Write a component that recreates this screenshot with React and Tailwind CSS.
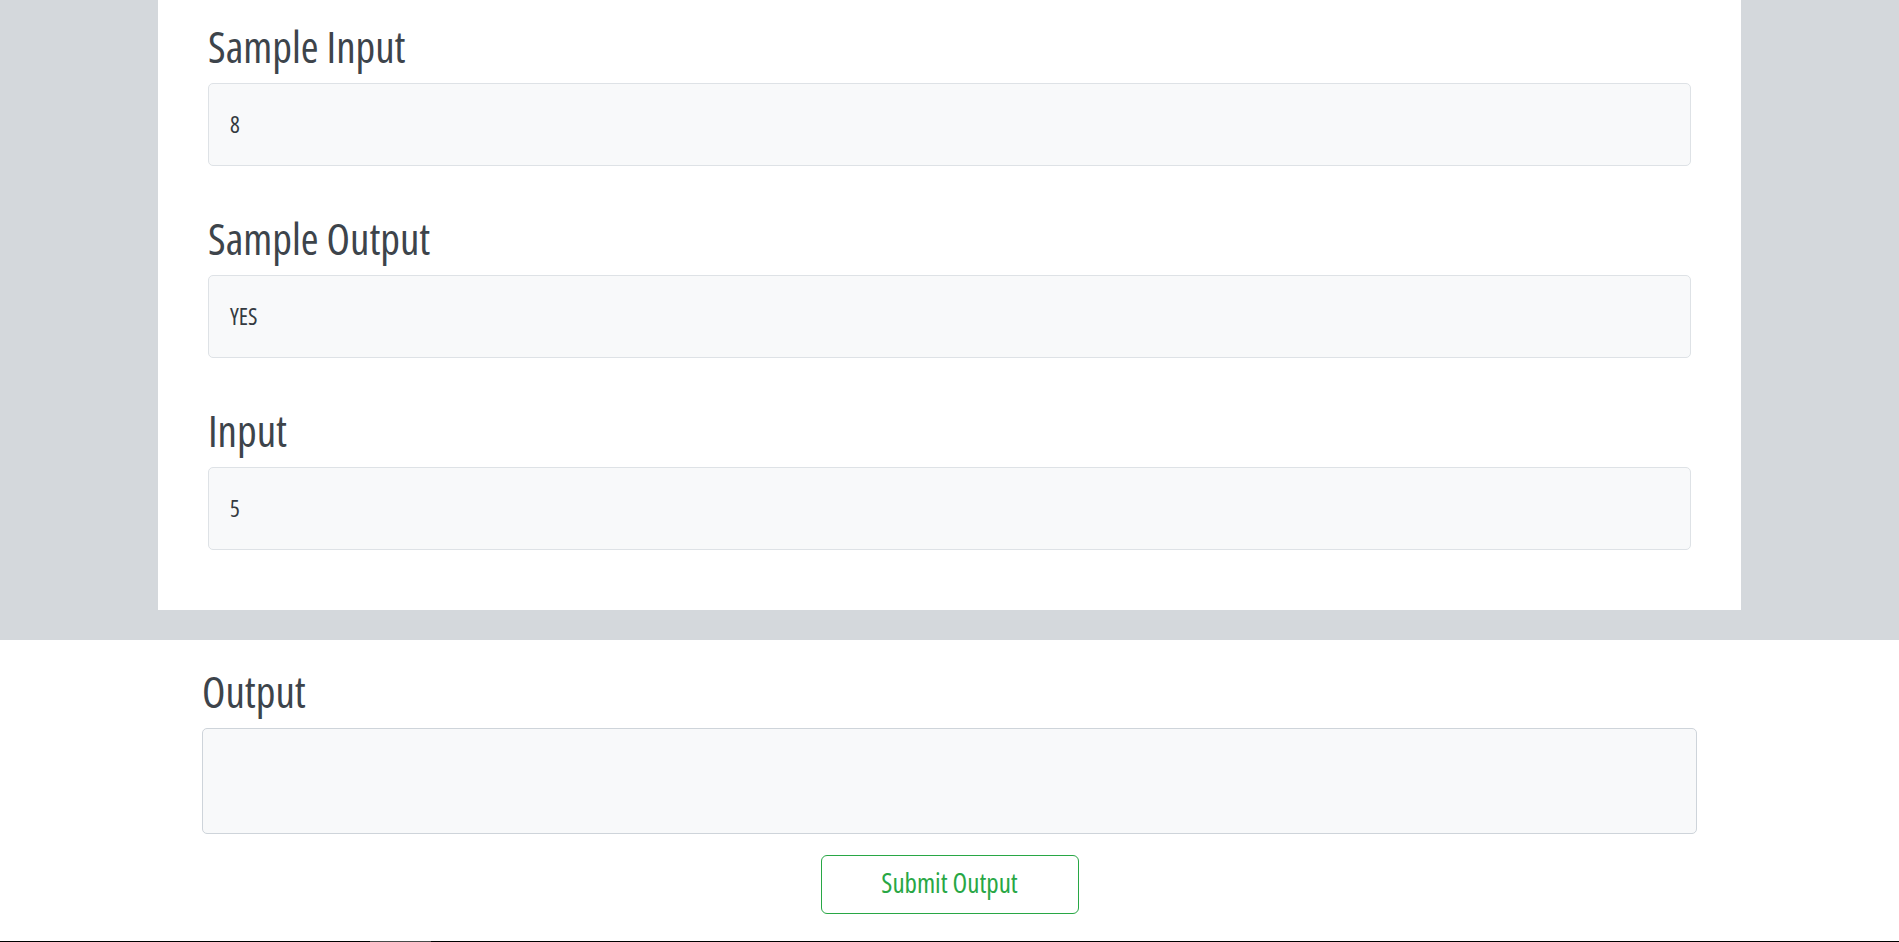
const samples = [
  { title: 'Sample Input', value: '8' },
  { title: 'Sample Output', value: 'YES' },
  { title: 'Input', value: '5' },
];

function Heading({ children }) {
  return (
    <h2 className="text-[43px] leading-[50px] font-normal font-stretch-condensed text-[#3d444b] mb-[11px]">
      {children}
    </h2>
  );
}

export default function App() {
  return (
    <div className="min-h-[942px] flex flex-col bg-white font-['Open_Sans',sans-serif]">
      <div className="bg-[#d4d8dc] pb-[30px]">
        <div className="mx-[158px] bg-white px-[50px] pt-[22px] pb-[60px]">
          {samples.map((s, i) => (
            <div key={s.title} className={i < samples.length - 1 ? 'mb-[48px]' : ''}>
              <Heading>{s.title}</Heading>
              <div className="h-[83px] flex items-center pl-[21px] bg-[#f8f9fa] border border-[#dee2e6] rounded-[5px] text-[23px] font-stretch-condensed text-[#343a40]">
                {s.value}
              </div>
            </div>
          ))}
        </div>
      </div>

      <div className="mx-[202px] pt-[27px] flex-1">
        <Heading>Output</Heading>
        <textarea className="block w-full h-[106px] bg-[#f8f9fa] border border-[#ced4da] rounded-[5px] resize-none outline-none" />
        <div className="flex justify-center mt-[21px]">
          <button className="w-[258px] h-[59px] pb-[3px] border border-[#28a745] rounded-[6px] text-[#28a745] text-[27px] font-stretch-condensed bg-white">
            Submit Output
          </button>
        </div>
      </div>

      <div className="h-px bg-black flex">
        <div className="ml-[370px] w-[61px] bg-[#4a4a4a]" />
      </div>
    </div>
  );
}
